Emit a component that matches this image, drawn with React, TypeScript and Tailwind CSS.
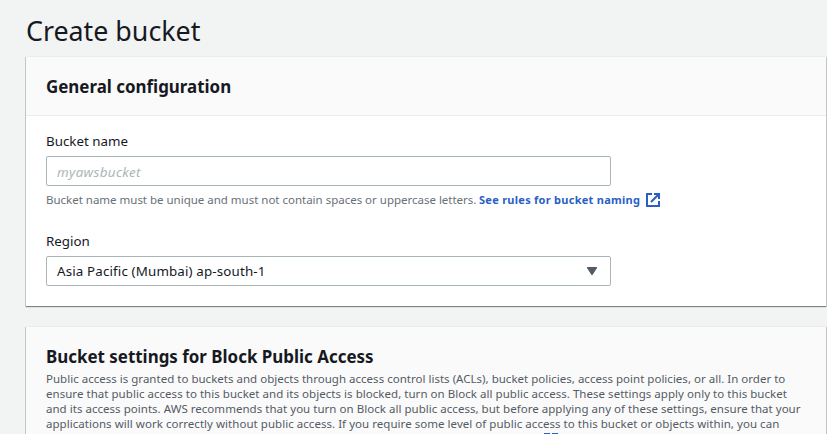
const description = [
  { text: 'Public access is granted to buckets and objects through access control lists (ACLs), bucket policies, access point policies, or all. In order to', spacing: 'tracking-[0.015px]' },
  { text: 'ensure that public access to this bucket and its objects is blocked, turn on Block all public access. These settings apply only to this bucket', spacing: 'tracking-[0.038px]' },
  { text: 'and its access points. AWS recommends that you turn on Block all public access, but before applying any of these settings, ensure that your', spacing: 'tracking-[0.03px]' },
  { text: 'applications will work correctly without public access. If you require some level of public access to this bucket or objects within, you can', spacing: 'tracking-[0.04px]' },
];

function ExternalIcon({ className = '' }: { className?: string }) {
  return (
    <svg viewBox="0 0 14 14" className={`h-[14px] w-[14px] shrink-0 ${className}`} fill="none" stroke="#2a5fc4" strokeWidth="2">
      <path d="M6 1H1v12h12V8" />
      <path d="M8 1h5v5M12.5 1.5 5 9" />
    </svg>
  );
}

export default function App() {
  return (
    <div className="h-[434px] w-[827px] overflow-hidden bg-[#f2f3f3] pl-[26px] pr-px font-['Noto_Sans',sans-serif] text-[#16191f]">
      <h1 className="h-[57px] whitespace-nowrap pt-[12px] text-[28px] leading-[36px]">
        <span className="inline-block origin-left scale-x-[0.957]">Create bucket</span>
      </h1>

      <section className="h-[250px] border-b border-b-[#7b868c] bg-white shadow-[-1px_0_0_#c2c6c7,1px_0_0_#c2c6c7,0_-1px_0_#eaeded,0_1px_0_#dde0e1]">
        <header className="flex h-[59px] items-center border-b border-[#eaeded] bg-[#fafafa] px-5">
          <h2 className="origin-left scale-x-[0.94] whitespace-nowrap text-[18px] font-bold leading-[22px]">General configuration</h2>
        </header>
        <div className="whitespace-nowrap px-5 pt-[14px]">
          <label className="block h-[22px] text-[13.35px] leading-[22px]">Bucket name</label>
          <div className="mt-1 h-[30px] w-[565px] rounded-[2px] border border-[#aab7b8] px-[10px] pt-[4px] text-[13.35px] italic leading-[22px] tracking-[0.37px] text-[#aab7b8]">myawsbucket</div>
          <div className="mt-[6px] flex h-4 items-center text-[11.5px] leading-4">
            <span className="w-[433px] tracking-[-0.01px] text-[#687078]">Bucket name must be unique and must not contain spaces or uppercase letters.</span>
            <span className="w-[167px] text-[11px] font-bold tracking-[0.27px] text-[#2a5fc4]">See rules for bucket naming</span>
            <ExternalIcon />
          </div>
          <label className="mt-[22px] block h-[22px] text-[13.35px] leading-[22px]">Region</label>
          <div className="mt-1 flex h-[30px] w-[565px] items-center justify-between rounded-[2px] border border-[#aab7b8] pl-[10px] pr-[13px] text-[13.35px] leading-[22px] tracking-[0.15px]">
            <span>Asia Pacific (Mumbai) ap-south-1</span>
            <svg viewBox="0 0 10 8" className="h-2 w-[10px]" fill="#545b64"><path d="M0 0h10v1L5.5 8h-1L0 1z" /></svg>
          </div>
        </div>
      </section>

      <section className="mt-5 h-[120px] bg-[#fafafa] px-5 pt-[18px] shadow-[-1px_0_0_#c2c6c7,1px_0_0_#c2c6c7,0_-1px_0_#eaeded]">
        <h2 className="h-[26px] origin-left scale-x-[0.94] whitespace-nowrap text-[18px] font-bold leading-[22px]">Bucket settings for Block Public Access</h2>
        <div className="whitespace-nowrap text-[11.5px] leading-[15px] text-[#545b64]">
          {description.map((line) => (
            <p key={line.text} className={line.spacing}>{line.text}</p>
          ))}
        </div>
        <ExternalIcon className="ml-[498px] mt-[2px]" />
      </section>
    </div>
  );
}
